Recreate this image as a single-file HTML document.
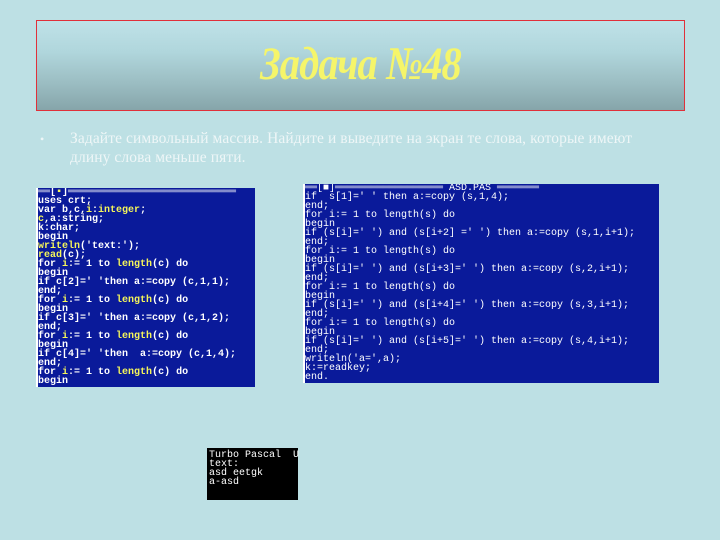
<!DOCTYPE html>
<html><head><meta charset="utf-8"><style>
body{margin:0;width:720px;height:540px;background:#bde0e4;position:relative;overflow:hidden;font-family:"Liberation Serif","Noto Serif CJK SC",serif}
.title{position:absolute;left:36px;top:20px;width:647px;height:89px;border:1px solid #e0303a;background:linear-gradient(#bfe2e8 0%,#b0d6dc 35%,#9bbdc2 70%,#86a5aa 100%)}
.title span{position:absolute;left:0;right:0;top:16px;text-align:center;font-size:47px;font-style:italic;font-weight:bold;color:#f5f56a;letter-spacing:-1px;transform:scaleX(0.86)}
.txt{position:absolute;left:70px;top:129px;width:620px;color:#eef6f7;font-size:15.5px;line-height:19px;letter-spacing:0.1px;white-space:nowrap}
.bul{position:absolute;left:40px;top:132px;color:#eef6f7;font-size:12px}
.code{position:absolute;background:#0a1a9a;font-family:"Liberation Mono",monospace;font-size:10px;line-height:9px;font-weight:bold;color:#fff;white-space:pre;overflow:hidden;border-left:2px solid #fff}
.code b{color:#f5f55a}
.term{position:absolute;left:207px;top:448px;width:91px;height:52px;background:#000;color:#fff;font-family:"Liberation Mono",monospace;font-size:10px;line-height:9px;white-space:pre;padding:3px 0 0 2px;box-sizing:border-box}
</style></head><body>
<div class="title"><span>Задача №48</span></div>
<div class="bul">•</div>
<div class="txt">Задайте символьный массив. Найдите и выведите на экран те слова, которые имеют<br>длину слова меньше пяти.</div>
<div class="code" style="left:36px;top:188px;width:217px;height:199px">══[<b>▪</b>]════════════════════════════
uses crt;
var b,c,<b>i</b>:<b>integer</b>;
<b>c</b>,a:string;
k:char;
begin
<b>writeln</b>('text:');
<b>read</b>(c);
for <b>i</b>:= 1 to <b>length</b>(c) do
begin
if c[2]=' 'then a:=copy (c,1,1);
end;
for <b>i</b>:= 1 to <b>length</b>(c) do
begin
if c[3]=' 'then a:=copy (c,1,2);
end;
for <b>i</b>:= 1 to <b>length</b>(c) do
begin
if c[4]=' 'then  a:=copy (c,1,4);
end;
for <b>i</b>:= 1 to <b>length</b>(c) do
begin</div>
<div class="code" style="left:303px;top:184px;width:354px;height:199px;font-weight:normal">══[■]══════════════════ ASD.PAS ═══════
if  s[1]=' ' then a:=copy (s,1,4);
end;
for i:= 1 to length(s) do
begin
if (s[i]=' ') and (s[i+2] =' ') then a:=copy (s,1,i+1);
end;
for i:= 1 to length(s) do
begin
if (s[i]=' ') and (s[i+3]=' ') then a:=copy (s,2,i+1);
end;
for i:= 1 to length(s) do
begin
if (s[i]=' ') and (s[i+4]=' ') then a:=copy (s,3,i+1);
end;
for i:= 1 to length(s) do
begin
if (s[i]=' ') and (s[i+5]=' ') then a:=copy (s,4,i+1);
end;
writeln('a=',a);
k:=readkey;
end.</div>
<div class="term">Turbo Pascal  U
text:
asd eetgk
a-asd</div>
</body></html>
